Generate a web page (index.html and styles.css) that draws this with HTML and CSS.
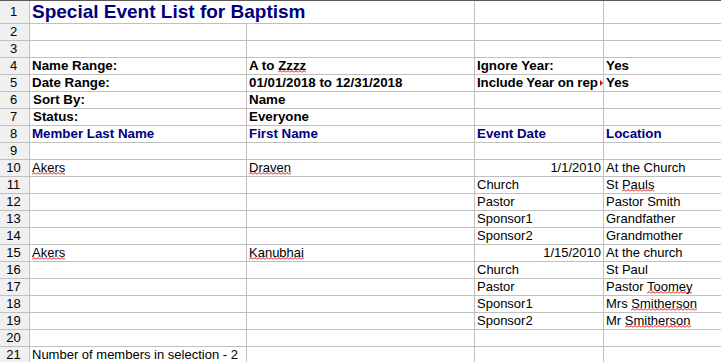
FILE: index.html
```html
<!DOCTYPE html>
<html>
<head>
<meta charset="utf-8">
<link rel="stylesheet" href="styles.css">
</head>
<body>
<div class="sheet">
  <div class="rh rh-title">1</div><div class="c title span2">Special Event List for Baptism</div><div class="c"></div><div class="c"></div>
  <div class="rh">2</div><div class="c"></div><div class="c"></div><div class="c"></div><div class="c"></div>
  <div class="rh">3</div><div class="c"></div><div class="c"></div><div class="c"></div><div class="c"></div>
  <div class="rh">4</div><div class="c b">Name Range:</div><div class="c b">A to <span class="sp">Zzzz</span></div><div class="c b">Ignore Year:</div><div class="c b">Yes</div>
  <div class="rh">5</div><div class="c b">Date Range:</div><div class="c b">01/01/2018 to 12/31/2018</div><div class="c b clip">Include Year on rep<span class="more"></span></div><div class="c b">Yes</div>
  <div class="rh">6</div><div class="c b ind">Sort By:</div><div class="c b">Name</div><div class="c"></div><div class="c"></div>
  <div class="rh">7</div><div class="c b ind">Status:</div><div class="c b">Everyone</div><div class="c"></div><div class="c"></div>
  <div class="rh">8</div><div class="c hd">Member Last Name</div><div class="c hd">First Name</div><div class="c hd">Event Date</div><div class="c hd">Location</div>
  <div class="rh">9</div><div class="c"></div><div class="c"></div><div class="c"></div><div class="c"></div>
  <div class="rh">10</div><div class="c"><span class="sp">Akers</span></div><div class="c"><span class="sp">Draven</span></div><div class="c r">1/1/2010</div><div class="c">At the Church</div>
  <div class="rh">11</div><div class="c"></div><div class="c"></div><div class="c">Church</div><div class="c">St <span class="sp">Pauls</span></div>
  <div class="rh">12</div><div class="c"></div><div class="c"></div><div class="c">Pastor</div><div class="c">Pastor Smith</div>
  <div class="rh">13</div><div class="c"></div><div class="c"></div><div class="c">Sponsor1</div><div class="c">Grandfather</div>
  <div class="rh">14</div><div class="c"></div><div class="c"></div><div class="c">Sponsor2</div><div class="c">Grandmother</div>
  <div class="rh">15</div><div class="c"><span class="sp">Akers</span></div><div class="c"><span class="sp">Kanubhai</span></div><div class="c r">1/15/2010</div><div class="c">At the church</div>
  <div class="rh">16</div><div class="c"></div><div class="c"></div><div class="c">Church</div><div class="c">St Paul</div>
  <div class="rh">17</div><div class="c"></div><div class="c"></div><div class="c">Pastor</div><div class="c">Pastor <span class="sp">Toomey</span></div>
  <div class="rh">18</div><div class="c"></div><div class="c"></div><div class="c">Sponsor1</div><div class="c">Mrs <span class="sp">Smitherson</span></div>
  <div class="rh">19</div><div class="c"></div><div class="c"></div><div class="c">Sponsor2</div><div class="c">Mr <span class="sp">Smitherson</span></div>
  <div class="rh">20</div><div class="c"></div><div class="c"></div><div class="c"></div><div class="c"></div>
  <div class="rh">21</div><div class="c">Number of members in selection - 2</div><div class="c"></div><div class="c"></div><div class="c"></div>
</div>
</body>
</html>
```
FILE: styles.css
```css
html, body {
  margin: 0;
  padding: 0;
  background: #ffffff;
  overflow: hidden;
}
.sheet {
  width: 721px;
  display: grid;
  grid-template-columns: 29px 216px 227px 128px 1fr;
  grid-template-rows: 22px repeat(20, 16px);
  gap: 1px;
  background: #c0c0c0;
  border-top: 1px solid #5a5a5a;
  font-family: "Liberation Sans", Arial, sans-serif;
  font-size: 13px;
  line-height: 16px;
  color: #000000;
}
.rh {
  background: #f0f0f0;
  text-align: center;
  padding-right: 2px;
  line-height: 16px;
  font-size: 13px;
}
.rh-title {
  line-height: 22px;
}
.c {
  background: #ffffff;
  padding: 0 2px;
  white-space: nowrap;
  overflow: hidden;
  position: relative;
}
.span2 {
  grid-column: span 2;
}
.title {
  font-size: 19px;
  line-height: 22px;
  font-weight: bold;
  color: #000080;
}
.b {
  font-weight: bold;
  font-size: 13.33px;
}
.ind {
  padding-left: 3px;
}
.hd {
  font-weight: bold;
  font-size: 13.33px;
  color: #000080;
}
.r {
  text-align: right;
}
.clip {
  padding-right: 1px;
  letter-spacing: -0.1px;
}
.more {
  position: absolute;
  right: 0;
  top: 5px;
  width: 0;
  height: 0;
  border-top: 3px solid transparent;
  border-bottom: 3px solid transparent;
  border-left: 3px solid #e00000;
}
.sp {
  background-image: url("data:image/svg+xml,%3Csvg xmlns='http://www.w3.org/2000/svg' width='4' height='3'%3E%3Cpolyline points='0,2.5 2,0.5 4,2.5' fill='none' stroke='%23e00000' stroke-width='1'/%3E%3C/svg%3E");
  background-repeat: repeat-x;
  background-size: 4px 3px;
  background-position: 0 12px;
}
```
